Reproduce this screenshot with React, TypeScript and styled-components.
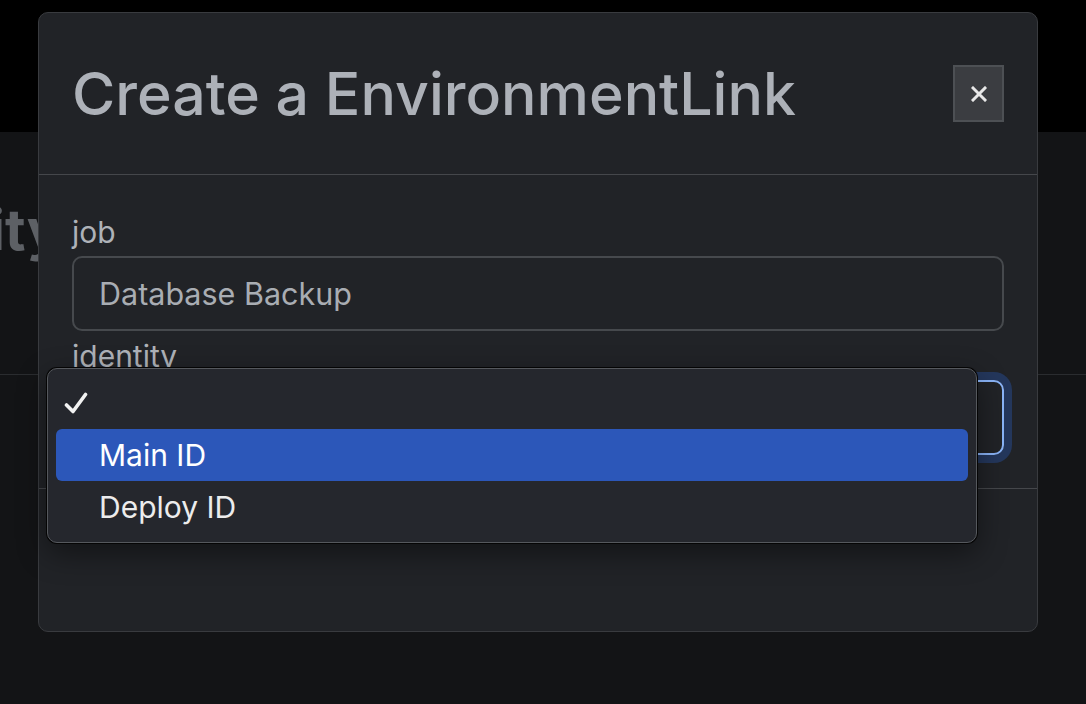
import React from "react";
import styled, { createGlobalStyle } from "styled-components";

const GlobalStyle = createGlobalStyle`
  html, body { margin: 0; padding: 0; background: #131416; }
  body { font-family: Inter, "Noto Sans", sans-serif; overflow: hidden; }
  * { box-sizing: border-box; }
`;

const Screen = styled.div`
  position: relative;
  width: 1086px;
  height: 704px;
  overflow: hidden;
  background: #131416;
`;

const TopBar = styled.div`
  height: 132px;
  background: #000;
`;

const PageSection = styled.section`
  height: 243px;
  padding-top: 65px;
  border-bottom: 1px solid #2a2c2f;
  overflow: hidden;
`;

const PageHeading = styled.h1`
  margin: 0 0 0 -150px;
  font-size: 56px;
  line-height: 67px;
  font-weight: 700;
  color: #5d6065;
  white-space: nowrap;
`;

const Backdrop = styled.div`
  position: absolute;
  inset: 0;
  padding: 12px 0 0 38px;
`;

const Dialog = styled.div`
  width: 1000px;
  background: #212327;
  border: 1px solid #393b3f;
  border-radius: 10px;
  display: flex;
  flex-direction: column;
`;

const Header = styled.div`
  height: 162px;
  padding: 0 33px;
  display: flex;
  align-items: center;
  justify-content: space-between;
  border-bottom: 1px solid #45474b;
`;

const Title = styled.h2`
  margin: 0;
  font-size: 59px;
  line-height: 72px;
  font-weight: 500;
  color: #adb1b8;
`;

const CloseButton = styled.button`
  width: 51px;
  height: 57px;
  padding: 0;
  display: flex;
  align-items: center;
  justify-content: center;
  background: #3b3d41;
  border: 2px solid #4d5054;
  border-radius: 0;
`;

const Body = styled.div`
  height: 314px;
  padding: 34px 33px 32px;
  border-bottom: 1px solid #45474b;
  display: flex;
  flex-direction: column;
`;

const Field = styled.div<{ $gap?: number }>`
  position: relative;
  display: flex;
  flex-direction: column;
  margin-top: ${(p) => p.$gap ?? 0}px;
`;

const Label = styled.label`
  font-size: 30px;
  line-height: 46px;
  margin-bottom: 1px;
  color: #aeb2b8;
`;

const TextInput = styled.div`
  height: 75px;
  padding: 0 25px;
  display: flex;
  align-items: center;
  border: 2px solid #46494d;
  border-radius: 10px;
  font-size: 30.5px;
  color: #a9adb3;
`;

const SelectBox = styled.div`
  height: 75px;
  border: 2px solid #8ab4f8;
  border-radius: 10px;
  box-shadow: 0 0 0 8px #24375c;
`;

const Menu = styled.div`
  position: absolute;
  left: -25px;
  top: 35px;
  width: 930px;
  padding: 8px 8px 9px;
  background: #25272d;
  border: 1px solid #55585d;
  border-radius: 10px;
  box-shadow: 0 0 0 1px #050505, 0 10px 30px rgba(0, 0, 0, 0.45);
  display: flex;
  flex-direction: column;
`;

const MenuRow = styled.div<{ $active?: boolean }>`
  height: 52px;
  display: flex;
  align-items: center;
  padding-left: 43px;
  position: relative;
  border-radius: 6px;
  font-size: 30px;
  color: ${(p) => (p.$active ? "#ffffff" : "#ececec")};
  background: ${(p) => (p.$active ? "#2c57b9" : "transparent")};
`;

const CheckMark = styled.svg`
  position: absolute;
  left: 8px;
  top: 15px;
`;

const Footer = styled.div`
  height: 142px;
`;

export default function App() {
  return (
    <Screen>
      <GlobalStyle />
      <TopBar />
      <PageSection>
        <PageHeading>Identity</PageHeading>
      </PageSection>
      <Backdrop>
        <Dialog>
          <Header>
            <Title>Create a EnvironmentLink</Title>
            <CloseButton aria-label="Close">
              <svg width="16" height="16" viewBox="0 0 16 16">
                <path d="M2 2 L14 14 M14 2 L2 14" stroke="#e8e8e8" strokeWidth="3" strokeLinecap="square" />
              </svg>
            </CloseButton>
          </Header>
          <Body>
            <Field>
              <Label>job</Label>
              <TextInput>Database Backup</TextInput>
            </Field>
            <Field $gap={2}>
              <Label>identity</Label>
              <SelectBox />
              <Menu>
                <MenuRow>
                  <CheckMark width="24" height="22" viewBox="0 0 24 22">
                    <path d="M2.5 13 L9 19.5 L21.5 2.5" fill="none" stroke="#f2f2f2" strokeWidth="3.6" strokeLinecap="round" strokeLinejoin="round" />
                  </CheckMark>
                </MenuRow>
                <MenuRow $active>Main ID</MenuRow>
                <MenuRow>Deploy ID</MenuRow>
              </Menu>
            </Field>
          </Body>
          <Footer />
        </Dialog>
      </Backdrop>
    </Screen>
  );
}
